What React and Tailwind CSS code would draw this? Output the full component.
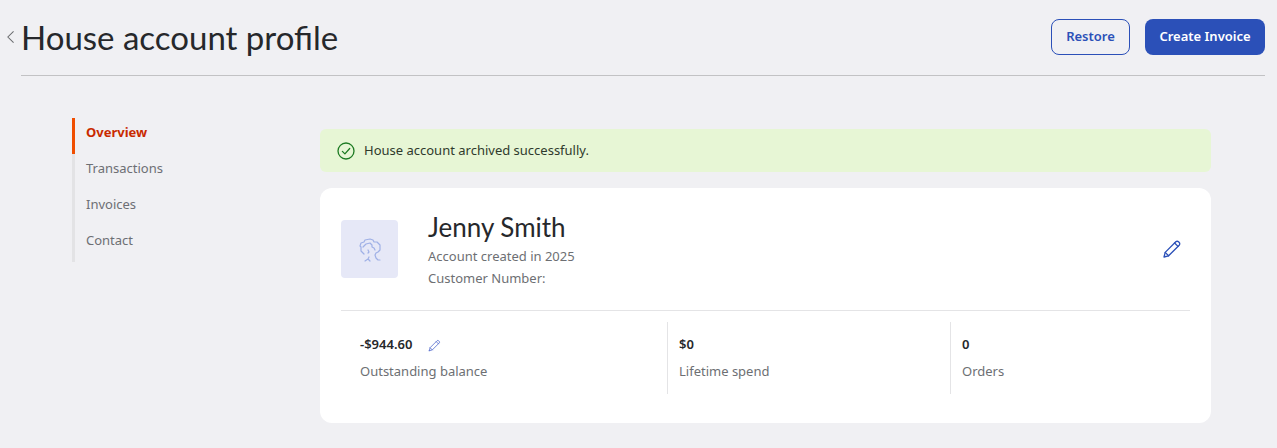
import React from 'react'

const body = "font-['Noto_Sans',sans-serif]"
const heading = "font-['Lato',sans-serif]"

const navItems = ['Overview', 'Transactions', 'Invoices', 'Contact']

const Pencil = ({ className }) => (
  <svg viewBox="0 0 20 20" fill="none" stroke="currentColor" strokeWidth="1.3" strokeLinejoin="round" strokeLinecap="round" className={className}>
    <path d="M2 18l1.2-4.6L13.8 2.8a1.9 1.9 0 0 1 2.7 0l.7.7a1.9 1.9 0 0 1 0 2.7L6.6 16.8 2 18z" />
    <path d="M12.6 4l3.4 3.4" />
    <path d="M3.2 13.4l3.4 3.4" />
  </svg>
)

const Stat = ({ value, label, edit, className }) => (
  <div className={`flex h-[72px] flex-col justify-center ${className}`}>
    <div className="flex h-5 items-center text-[13px] font-semibold text-[#26282b]">
      {value}
      {edit && <Pencil className="ml-4 h-[13px] w-[13px] text-[#5b72d0]" />}
    </div>
    <div className="mt-[6px] text-[13px] leading-5 text-[#6d6f73]">{label}</div>
  </div>
)

export default function App() {
  return (
    <div className={`h-[448px] w-full overflow-hidden bg-[#f0f0f3] ${body}`}>
      {/* page header */}
      <div className="flex h-[76px] items-start pr-3">
        <svg viewBox="0 0 10 16" fill="none" stroke="#6b6d70" strokeWidth="1.2" className="ml-[6px] mt-[30px] h-[14px] w-[9px] shrink-0">
          <path d="M8.5 1.5L2 8l6.5 6.5" />
        </svg>
        <div className="ml-[6px] flex h-[76px] flex-1 items-start justify-between border-b border-[#c2c2c4]">
          <h1 className={`mt-[15px] text-[33px] leading-[44px] text-[#26282b] ${heading}`}>House account profile</h1>
          <div className="mt-[19px] flex gap-[15px]">
            <button className="h-9 w-[79px] rounded-lg border border-[#2b50b8] text-[13px] font-semibold text-[#2b50b8]">Restore</button>
            <button className="h-9 w-[120px] rounded-lg bg-[#2b50b8] text-[13px] font-semibold text-white">Create Invoice</button>
          </div>
        </div>
      </div>

      <div className="flex items-start pl-[72px]">
        {/* side nav */}
        <nav className="mt-[42px] w-[248px] shrink-0">
          {navItems.map((item, i) => (
            <div
              key={item}
              className={`flex h-9 w-[200px] items-center border-l-[3px] pb-[6px] pl-[11px] text-[13px] ${
                i === 0 ? 'border-[#f04e00] font-bold text-[#c92a00]' : 'border-[#e3e3e5] text-[#6d6f73]'
              }`}
            >
              {item}
            </div>
          ))}
        </nav>

        {/* main column */}
        <div className="mt-[53px] w-[891px]">
          <div className="flex h-[43px] items-center rounded-md bg-[#e7f6d5] pl-[17px]">
            <svg viewBox="0 0 18 18" fill="none" stroke="#1c7a22" strokeWidth="1.3" strokeLinecap="round" strokeLinejoin="round" className="h-[18px] w-[18px]">
              <circle cx="9" cy="9" r="8" />
              <path d="M5.4 9.4l2.5 2.5 4.8-5.4" />
            </svg>
            <span className="ml-[9px] text-[13px] text-[#2f3a2c]">House account archived successfully.</span>
          </div>

          <div className="mt-[16px] h-[235px] rounded-xl bg-white px-[21px]">
            <div className="flex h-[123px] items-start border-b border-[#e4e4e6]">
              <div className="mt-[32px] flex h-[58px] w-[57px] items-center justify-center rounded bg-[#e6e8f7]">
                <svg viewBox="0 0 30 30" fill="none" stroke="#9fb0e6" strokeWidth="1.2" strokeLinecap="round" strokeLinejoin="round" className="h-[30px] w-[30px]">
                  <path d="M9 20l-2-2-1-1 0-4-1-1 1-3 3-1 1-2 5-1 3 1 1 2 3 0 3 3 0 5-2 2-2 1-1 2 1 3 2 2 2 0" />
                  <path d="M8 13l3-3 4-1 2 2 0 2 2 1 1 2" />
                  <path d="M13 16l1 2-1 1" />
                  <path d="M14 23l-1 2-3 2M13 25l2 2" />
                </svg>
              </div>
              <div className="ml-[30px] mt-[23px]">
                <div className={`text-[26px] leading-8 text-[#26282b] ${heading}`}>Jenny Smith</div>
                <div className="mt-[2px] text-[13px] leading-[22px] text-[#6d6f73]">Account created in 2025</div>
                <div className="text-[13px] leading-[22px] text-[#6d6f73]">Customer Number:</div>
              </div>
              <Pencil className="ml-auto mr-[8px] mt-[51px] h-[20px] w-[20px] text-[#2b50b8]" />
            </div>
            <div className="mt-[11px] flex">
              <Stat className="w-[326px] pl-[19px]" value="-$944.60" label="Outstanding balance" edit />
              <Stat className="w-[283px] border-l border-[#e4e4e6] pl-[11px]" value="$0" label="Lifetime spend" />
              <Stat className="flex-1 border-l border-[#e4e4e6] pl-[11px]" value="0" label="Orders" />
            </div>
          </div>
        </div>
      </div>
    </div>
  )
}
